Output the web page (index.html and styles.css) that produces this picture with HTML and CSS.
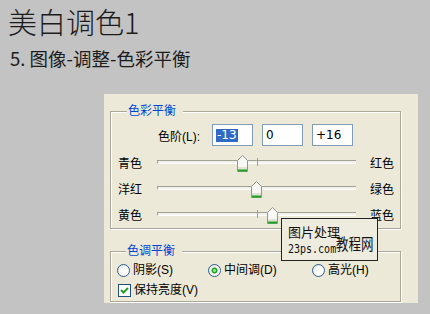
FILE: index.html
```html
<!DOCTYPE html>
<html lang="zh-CN">
  <head>
    <meta charset="utf-8">
    <title>美白调色1</title>
    <link rel="stylesheet" href="styles.css">
  </head>
  <body>
    <h1 class="title">美白调色1</h1>
    <p class="step">5. 图像-调整-色彩平衡</p>

    <div class="dialog">
      <fieldset class="group balance">
        <legend>色彩平衡</legend>
        <div class="levels">
          <span class="levels-label">色阶(L):</span>
          <span class="field"><span class="selected">-13</span></span>
          <span class="field">0</span>
          <span class="field">+16</span>
        </div>
        <div class="sliders">
          <span>青色</span>
          <div class="track">
            <i class="tick"></i>
            <svg class="thumb" style="left: 79px" width="11" height="17" viewBox="0 0 11 17">
              <path d="M5.5 0.5 L10.5 5.5 V16.5 H0.5 V5.5 Z" fill="#f7f7f4" stroke="#8e9a8e"/>
              <rect x="1" y="12" width="9" height="3" fill="#e2e2da"/>
              <rect x="1" y="14.5" width="9" height="2" fill="#21a121"/>
            </svg>
          </div>
          <span class="right">红色</span>

          <span>洋红</span>
          <div class="track">
            <i class="tick"></i>
            <svg class="thumb" style="left: 93px" width="11" height="17" viewBox="0 0 11 17">
              <path d="M5.5 0.5 L10.5 5.5 V16.5 H0.5 V5.5 Z" fill="#f7f7f4" stroke="#8e9a8e"/>
              <rect x="1" y="12" width="9" height="3" fill="#e2e2da"/>
              <rect x="1" y="14.5" width="9" height="2" fill="#21a121"/>
            </svg>
          </div>
          <span class="right">绿色</span>

          <span>黄色</span>
          <div class="track">
            <i class="tick"></i>
            <svg class="thumb" style="left: 109px" width="11" height="17" viewBox="0 0 11 17">
              <path d="M5.5 0.5 L10.5 5.5 V16.5 H0.5 V5.5 Z" fill="#f7f7f4" stroke="#8e9a8e"/>
              <rect x="1" y="12" width="9" height="3" fill="#e2e2da"/>
              <rect x="1" y="14.5" width="9" height="2" fill="#21a121"/>
            </svg>
          </div>
          <span class="right">蓝色</span>
        </div>
      </fieldset>

      <fieldset class="group tone">
        <legend>色调平衡</legend>
        <div class="radios">
          <label class="option"><span class="radio"></span>阴影(S)</label>
          <label class="option"><span class="radio on"></span>中间调(D)</label>
          <label class="option"><span class="radio"></span>高光(H)</label>
        </div>
        <label class="option keep">
          <span class="check">
            <svg width="11" height="11" viewBox="0 0 11 11">
              <path d="M2 5 L4.5 7.5 L9 3" fill="none" stroke="#21a121" stroke-width="2"/>
            </svg>
          </span>保持亮度(V)
        </label>
      </fieldset>

      <!-- watermark sits over the dialog -->
      <div class="watermark">
        <span class="wm-top">图片处理</span>
        <span class="wm-site">23ps.com</span>
        <span class="wm-name">教程网</span>
      </div>
    </div>
  </body>
</html>
```

FILE: styles.css
```css
* {
  box-sizing: border-box;
  margin: 0;
  padding: 0;
}

body {
  background: #c3c3c3;
  color: #1c1c1c;
  font-family: "Noto Sans CJK SC", sans-serif;
}

.title {
  padding-left: 8px;
  font-size: 29px;
  font-weight: 300;
  line-height: 42px;
}

.step {
  margin-top: 3px;
  padding-left: 10px;
  font-size: 18.5px;
  line-height: 26px;
}

.dialog {
  position: relative;
  width: 314px;
  height: 209px;
  margin: 23px 0 0 104px;
  padding: 10px 17px 0 6px;
  background: #ece9d8;
  color: #000;
  font-family: "Liberation Sans", "Noto Sans CJK SC", sans-serif;
  font-size: 12px;
}

.group {
  border: 1px solid #aca899;
  box-shadow: inset 1px 1px 0 #fff, 1px 1px 0 #fff;
  padding: 0 6px 0 7px;
}

.group legend {
  margin-left: 9px;
  padding: 0 7px 0 1px;
  color: #0046d5;
  line-height: 14px;
  background: #ece9d8;
}

.balance {
  height: 125px;
}

.levels {
  display: flex;
  align-items: center;
  gap: 9px;
  margin-top: 6px;
  padding-left: 40px;
}

.levels-label {
  margin-right: 3px;
}

.field {
  width: 41px;
  height: 22px;
  padding-left: 3px;
  border: 1px solid #7f9db9;
  background: #fff;
  font-family: "DejaVu Sans", sans-serif;
  font-size: 12px;
  line-height: 20px;
}

.selected {
  display: inline-block;
  padding: 0 1px;
  background: #316ac5;
  color: #fff;
  line-height: 13px;
}

.sliders {
  display: grid;
  grid-template-columns: 39px 199px 1fr;
  grid-auto-rows: 26px;
  align-items: center;
  margin-top: 3px;
}

.right {
  padding-left: 14px;
}

.track {
  position: relative;
  height: 4px;
  border-top: 1px solid #a09f95;
  border-left: 1px solid #a09f95;
  border-bottom: 1px solid #fff;
  background: #f3f2ea;
}

.tick {
  position: absolute;
  left: 99px;
  top: -3px;
  width: 1px;
  height: 8px;
  background: #a09f95;
}

.thumb {
  position: absolute;
  top: -6px;
  display: block;
}

.tone {
  height: 58px;
  margin-top: 15px;
  padding-left: 6px;
}

.radios {
  display: grid;
  grid-template-columns: 91px 104px auto;
  margin-top: 4px;
}

.option {
  display: flex;
  align-items: center;
  gap: 3px;
  height: 16px;
  line-height: 16px;
}

.keep {
  margin: 4px 0 0 1px;
}

.radio {
  width: 13px;
  height: 13px;
  border: 1px solid #2f5f8f;
  border-radius: 50%;
  background: radial-gradient(circle at 65% 65%, #fff 35%, #d8d8d0 100%);
}

.radio.on {
  background:
    radial-gradient(circle, #8ee88e 0 1px, #21a121 2px 2.5px, transparent 3.5px),
    radial-gradient(circle at 65% 65%, #fff 35%, #d8d8d0 100%);
}

.check {
  display: flex;
  align-items: center;
  justify-content: center;
  width: 13px;
  height: 13px;
  border: 1px solid #1c5180;
  background: #fff;
}

.watermark {
  position: absolute;
  left: 177px;
  top: 124px;
  width: 97px;
  height: 43px;
  display: grid;
  grid-template-columns: 48px auto;
  grid-template-rows: 19px 16px;
  padding: 3px 0 0 6px;
  border: 1px solid #222;
  background: #eeebdf;
  color: #111;
  font-family: "Noto Sans CJK SC", sans-serif;
}

.wm-top {
  grid-column: 1;
  grid-row: 1;
  font-size: 13px;
  line-height: 19px;
  white-space: nowrap;
}

.wm-site {
  grid-column: 1;
  grid-row: 2;
  font-family: "DejaVu Sans Mono", monospace;
  font-size: 10px;
  line-height: 16px;
  transform: scaleY(1.2);
}

.wm-name {
  grid-column: 2;
  grid-row: 1 / 3;
  align-self: end;
  margin-bottom: 3px;
  font-size: 12.5px;
  line-height: 16px;
  transform: scaleY(1.3);
  transform-origin: bottom;
}
```
